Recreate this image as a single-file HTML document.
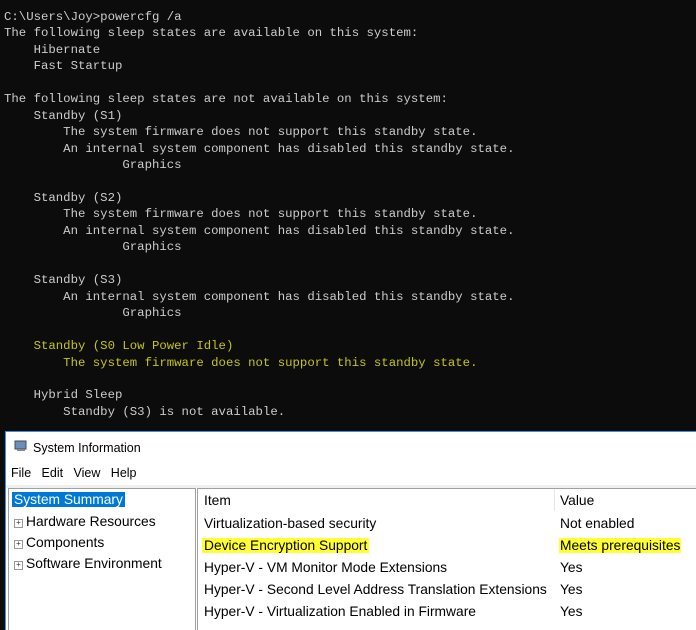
<!DOCTYPE html>
<html><head><meta charset="utf-8"><style>
body{margin:0;width:696px;height:629px;background:#0c0c0c;overflow:hidden;position:relative;font-family:"Liberation Sans",sans-serif}
pre{margin:0;position:absolute;left:4px;top:9px;font-family:"Liberation Mono",monospace;font-size:12.33px;line-height:16.45px;color:#cccccc}
.y{color:#c4c41a}
.win{position:absolute;left:5px;top:431px;width:691px;height:198px;background:#fff;border-top:1px solid #3c8ed6;border-left:1px solid #3c8ed6;overflow:hidden}
.t{position:absolute;font-size:12.5px;color:#000;white-space:nowrap}
.pane .t{font-size:13.8px}
.pane{position:absolute;top:56px;border:1px solid #a0a0a0;background:#fff;height:150px}
.hl{background:#ffff33}
.sel{background:#0078d7;color:#fff;padding:0 2px}
.pl{display:inline-block;width:7px;height:7px;border:1px solid #999;font-size:8px;line-height:6px;text-align:center;color:#333;margin-right:3px;vertical-align:1px}
</style></head><body>
<pre>C:\Users\Joy&gt;powercfg /a
The following sleep states are available on this system:
    Hibernate
    Fast Startup

The following sleep states are not available on this system:
    Standby (S1)
        The system firmware does not support this standby state.
        An internal system component has disabled this standby state.
                Graphics

    Standby (S2)
        The system firmware does not support this standby state.
        An internal system component has disabled this standby state.
                Graphics

    Standby (S3)
        An internal system component has disabled this standby state.
                Graphics

<span class="y">    Standby (S0 Low Power Idle)
        The system firmware does not support this standby state.</span>

    Hybrid Sleep
        Standby (S3) is not available.</pre>
<div class="win">
 <svg style="position:absolute;left:8px;top:8px" width="14" height="12"><rect x="1" y="1" width="11" height="8" fill="#6a8fb8" stroke="#445"/><rect x="3" y="9" width="8" height="2" fill="#888"/></svg>
 <div class="t" style="left:27px;top:9px">System Information</div>
 <div class="t" style="left:5px;top:34px">File&nbsp;&nbsp; Edit&nbsp;&nbsp; View&nbsp;&nbsp; Help</div>
 <div style="position:absolute;left:0;top:53px;width:691px;height:3px;background:#f0f0f0"></div>
 <div class="pane" style="left:2px;width:186px">
  <div class="t" style="left:3px;top:3px"><span class="sel">System Summary</span></div>
  <div class="t" style="left:5px;top:25px"><span class="pl">+</span>Hardware Resources</div>
  <div class="t" style="left:5px;top:46px"><span class="pl">+</span>Components</div>
  <div class="t" style="left:5px;top:67px"><span class="pl">+</span>Software Environment</div>
 </div>
 <div class="pane" style="left:191px;width:510px">
  <div style="position:absolute;left:356px;top:0;width:1px;height:22px;background:#e5e5e5"></div>
  <div class="t" style="left:6px;top:4px">Item</div>
  <div class="t" style="left:362px;top:4px">Value</div>
  <div class="t" style="left:6px;top:27px">Virtualization-based security</div>
  <div class="t" style="left:362px;top:27px">Not enabled</div>
  <div class="t hl" style="left:4px;top:49px;padding:0 2px">Device Encryption Support</div>
  <div class="t hl" style="left:361px;top:49px;padding:0 1px">Meets prerequisites</div>
  <div class="t" style="left:6px;top:71px">Hyper-V - VM Monitor Mode Extensions</div>
  <div class="t" style="left:362px;top:71px">Yes</div>
  <div class="t" style="left:6px;top:93px">Hyper-V - Second Level Address Translation Extensions</div>
  <div class="t" style="left:362px;top:93px">Yes</div>
  <div class="t" style="left:6px;top:115px">Hyper-V - Virtualization Enabled in Firmware</div>
  <div class="t" style="left:362px;top:115px">Yes</div>
 </div>
</div>
</body></html>
